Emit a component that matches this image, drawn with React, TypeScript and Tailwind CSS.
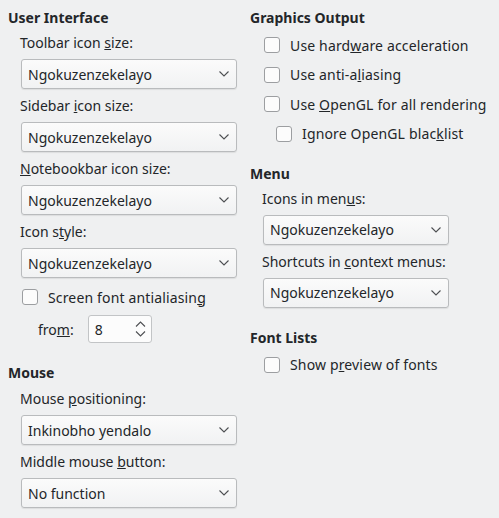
import React from "react";

const Chevron = () => (
  <svg width="10" height="6" viewBox="0 0 10 6" className="shrink-0">
    <path d="M0.5 0.5 L5 5 L9.5 0.5" fill="none" stroke="#4d4f52" strokeWidth="1.1" />
  </svg>
);

const Combo = ({ value, w }: { value: string; w: string }) => (
  <div
    className={`${w} h-[30px] flex items-center justify-between pl-[6px] pr-[7px] rounded-[3px] border border-[#b9bbbd] bg-gradient-to-b from-[#fbfbfb] to-[#f1f2f3] shadow-[0_1px_1px_rgba(0,0,0,0.08)]`}
  >
    <span>{value}</span>
    <Chevron />
  </div>
);

const Check = ({ children, className = "" }: { children: React.ReactNode; className?: string }) => (
  <div className={`flex items-center h-[30px] ${className}`}>
    <div className="w-[16px] h-[16px] rounded-[3px] border border-[#9c9ea1] bg-[#fcfcfc] shrink-0" />
    <span className="ml-[10px] tracking-[0.15px]">{children}</span>
  </div>
);

const Heading = ({ children, className = "" }: { children: React.ReactNode; className?: string }) => (
  <div className={`font-bold leading-[18px] ${className}`}>{children}</div>
);

const Label = ({ children, className = "" }: { children: React.ReactNode; className?: string }) => (
  <div className={`leading-[18px] ${className}`}>{children}</div>
);

export default function App() {
  return (
    <div
      className="w-[499px] h-[518px] bg-[#eff0f1] text-[#232629] text-[14px] flex overflow-hidden"
      style={{ fontFamily: '"Noto Sans", "Open Sans", sans-serif' }}
    >
      {/* left column */}
      <div className="w-[242px] shrink-0 pl-[8px] pt-[9px] flex flex-col">
        <Heading>User Interface</Heading>
        <div className="pl-[12px] flex flex-col">
          <Label className="mt-[7px]">Toolbar icon <u>s</u>ize:</Label>
          <div className="mt-[7px] pl-[1px]"><Combo value="Ngokuzenzekelayo" w="w-[216px]" /></div>
          <Label className="mt-[8px]">Sidebar <u>i</u>con size:</Label>
          <div className="mt-[7px] pl-[1px]"><Combo value="Ngokuzenzekelayo" w="w-[216px]" /></div>
          <Label className="mt-[8px]"><u>N</u>otebookbar icon size:</Label>
          <div className="mt-[7px] pl-[1px]"><Combo value="Ngokuzenzekelayo" w="w-[216px]" /></div>
          <Label className="mt-[8px]">Icon s<u>t</u>yle:</Label>
          <div className="mt-[7px] pl-[1px]"><Combo value="Ngokuzenzekelayo" w="w-[216px]" /></div>
          <div className="mt-[4px] pl-[2px]">
            <Check>Screen font antialiasin<u>g</u></Check>
          </div>
          <div className="mt-[3px] flex items-center pl-[18px]">
            <span>fro<u>m</u>:</span>
            <div className="ml-[14px] w-[64px] h-[28px] rounded-[3px] border border-[#c2c4c6] bg-[#fcfcfc] flex items-center justify-between pl-[6px] pr-[5px]">
              <span>8</span>
              <svg width="11" height="16" viewBox="0 0 11 16">
                <path d="M1 5.5 L5.5 1 L10 5.5" fill="none" stroke="#4d4f52" strokeWidth="1.1" />
                <path d="M1 10.5 L5.5 15 L10 10.5" fill="none" stroke="#4d4f52" strokeWidth="1.1" />
              </svg>
            </div>
          </div>
        </div>
        <Heading className="mt-[21px]">Mouse</Heading>
        <div className="pl-[12px] flex flex-col">
          <Label className="mt-[8px]">Mouse <u>p</u>ositioning:</Label>
          <div className="mt-[7px] pl-[1px]"><Combo value="Inkinobho yendalo" w="w-[216px]" /></div>
          <Label className="mt-[8px]">Middle mouse <u>b</u>utton:</Label>
          <div className="mt-[7px] pl-[1px]"><Combo value="No function" w="w-[216px]" /></div>
        </div>
      </div>

      {/* right column */}
      <div className="ml-[8px] pt-[9px] flex flex-col whitespace-nowrap">
        <Heading>Graphics Output</Heading>
        <div className="pl-[14px] flex flex-col mt-[3px]">
          <Check>Use hard<u>w</u>are acceleration</Check>
          <Check className="-mt-[0.5px]">Use anti-a<u>l</u>iasing</Check>
          <Check className="-mt-[0.5px]">Use <u>O</u>penGL for all rendering</Check>
          <Check className="pl-[12px] -mt-[0.5px]">Ignore OpenGL blac<u>k</u>list</Check>
        </div>
        <Heading className="mt-[16px]">Menu</Heading>
        <div className="pl-[12px] flex flex-col">
          <Label className="mt-[7px]">Icons in men<u>u</u>s:</Label>
          <div className="mt-[7px] pl-[1px]"><Combo value="Ngokuzenzekelayo" w="w-[186px]" /></div>
          <Label className="mt-[8px]">Shortcuts in <u>c</u>ontext menus:</Label>
          <div className="mt-[7px] pl-[1px]"><Combo value="Ngokuzenzekelayo" w="w-[186px]" /></div>
        </div>
        <Heading className="mt-[21px]">Font Lists</Heading>
        <div className="pl-[14px] flex flex-col">
          <Check className="mt-[3px]">Show p<u>r</u>eview of fonts</Check>
        </div>
      </div>
    </div>
  );
}
